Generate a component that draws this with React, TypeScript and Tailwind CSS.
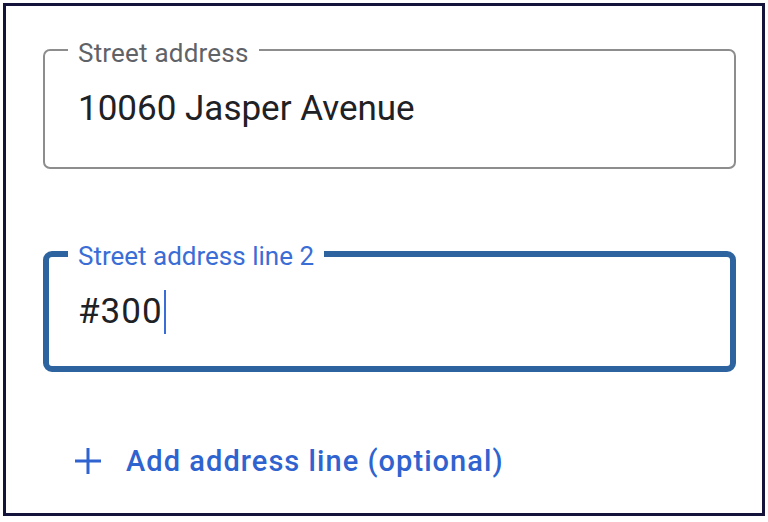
import React from "react";

export default function App() {
  const font = { fontFamily: "Roboto, 'Liberation Sans', sans-serif" };
  return (
    <div className="w-[768px] h-[522px] bg-white p-[3px]" style={font}>
      <div className="h-[513px] w-[762px] border-[3px] border-[#13133b] pl-[37px] pt-[43px]">
        {/* Field 1 */}
        <div className="relative flex h-[120px] w-[693px] items-center rounded-[7px] border-2 border-[#8d8d8d] pl-[33px]">
          <span className="absolute left-[23px] top-[-13px] bg-white px-[10px] text-[26px] leading-[30px] tracking-[0.2px] text-[#5f6368]">
            Street address
          </span>
          <span className="text-[35px] leading-[40px] text-[#202124]">10060 Jasper Avenue</span>
        </div>

        {/* Field 2 */}
        <div className="relative mt-[82px] flex h-[121px] w-[693px] items-center rounded-[9px] border-[6px] border-[#2d64a0] pl-[29px]">
          <span className="absolute left-[19px] top-[-16px] bg-white px-[10px] text-[26px] leading-[30px] text-[#3a6dd6]">
            Street address line 2
          </span>
          <span className="text-[35px] leading-[40px] tracking-[1px] text-[#202124]">#300</span>
          <span className="ml-[1px] inline-block h-[44px] w-[2px] bg-[#3a6dd6]" />
        </div>

        {/* Add line */}
        <div className="mt-[69px] flex h-[40px] items-center pl-[32px] text-[#2f63cf]">
          <svg width="26" height="26" viewBox="0 0 26 26" fill="none">
            <path d="M13 0v26M0 13h26" stroke="currentColor" strokeWidth="3" />
          </svg>
          <span className="ml-[25px] text-[29px] font-medium leading-[40px] tracking-[1.05px]">
            Add address line (optional)
          </span>
        </div>
      </div>
    </div>
  );
}
